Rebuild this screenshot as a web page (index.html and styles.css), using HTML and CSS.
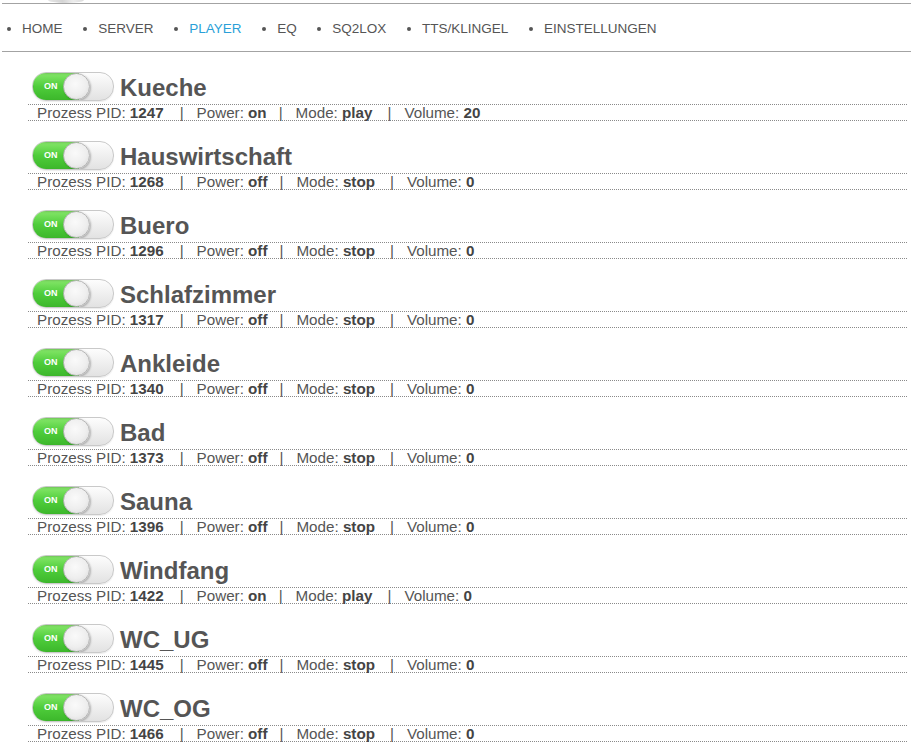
FILE: index.html
```html
<!DOCTYPE html>
<html lang="de">
<head>
<meta charset="utf-8">
<title>Player</title>
<link rel="stylesheet" href="styles.css">
</head>
<body>
<div class="top"><div class="logo-tip"></div></div>
<nav class="nav">
  <ul class="menu">
    <li><a href="#">HOME</a></li>
    <li><a href="#">SERVER</a></li>
    <li class="active"><a href="#">PLAYER</a></li>
    <li><a href="#">EQ</a></li>
    <li><a href="#">SQ2LOX</a></li>
    <li><a href="#">TTS/KLINGEL</a></li>
    <li><a href="#">EINSTELLUNGEN</a></li>
  </ul>
</nav>
<main class="players">
  <section class="player">
    <div class="head"><span class="toggle"><span class="on-label">ON</span><span class="knob"></span></span><h2 class="name">Kueche</h2></div>
    <div class="info">Prozess PID: <b>1247</b><span class="sep">|</span>Power: <b>on</b><span class="sep">|</span>Mode: <b>play</b><span class="sep">|</span>Volume: <b>20</b></div>
  </section>
  <section class="player">
    <div class="head"><span class="toggle"><span class="on-label">ON</span><span class="knob"></span></span><h2 class="name">Hauswirtschaft</h2></div>
    <div class="info">Prozess PID: <b>1268</b><span class="sep">|</span>Power: <b>off</b><span class="sep">|</span>Mode: <b>stop</b><span class="sep">|</span>Volume: <b>0</b></div>
  </section>
  <section class="player">
    <div class="head"><span class="toggle"><span class="on-label">ON</span><span class="knob"></span></span><h2 class="name">Buero</h2></div>
    <div class="info">Prozess PID: <b>1296</b><span class="sep">|</span>Power: <b>off</b><span class="sep">|</span>Mode: <b>stop</b><span class="sep">|</span>Volume: <b>0</b></div>
  </section>
  <section class="player">
    <div class="head"><span class="toggle"><span class="on-label">ON</span><span class="knob"></span></span><h2 class="name">Schlafzimmer</h2></div>
    <div class="info">Prozess PID: <b>1317</b><span class="sep">|</span>Power: <b>off</b><span class="sep">|</span>Mode: <b>stop</b><span class="sep">|</span>Volume: <b>0</b></div>
  </section>
  <section class="player">
    <div class="head"><span class="toggle"><span class="on-label">ON</span><span class="knob"></span></span><h2 class="name">Ankleide</h2></div>
    <div class="info">Prozess PID: <b>1340</b><span class="sep">|</span>Power: <b>off</b><span class="sep">|</span>Mode: <b>stop</b><span class="sep">|</span>Volume: <b>0</b></div>
  </section>
  <section class="player">
    <div class="head"><span class="toggle"><span class="on-label">ON</span><span class="knob"></span></span><h2 class="name">Bad</h2></div>
    <div class="info">Prozess PID: <b>1373</b><span class="sep">|</span>Power: <b>off</b><span class="sep">|</span>Mode: <b>stop</b><span class="sep">|</span>Volume: <b>0</b></div>
  </section>
  <section class="player">
    <div class="head"><span class="toggle"><span class="on-label">ON</span><span class="knob"></span></span><h2 class="name">Sauna</h2></div>
    <div class="info">Prozess PID: <b>1396</b><span class="sep">|</span>Power: <b>off</b><span class="sep">|</span>Mode: <b>stop</b><span class="sep">|</span>Volume: <b>0</b></div>
  </section>
  <section class="player">
    <div class="head"><span class="toggle"><span class="on-label">ON</span><span class="knob"></span></span><h2 class="name">Windfang</h2></div>
    <div class="info">Prozess PID: <b>1422</b><span class="sep">|</span>Power: <b>on</b><span class="sep">|</span>Mode: <b>play</b><span class="sep">|</span>Volume: <b>0</b></div>
  </section>
  <section class="player">
    <div class="head"><span class="toggle"><span class="on-label">ON</span><span class="knob"></span></span><h2 class="name">WC_UG</h2></div>
    <div class="info">Prozess PID: <b>1445</b><span class="sep">|</span>Power: <b>off</b><span class="sep">|</span>Mode: <b>stop</b><span class="sep">|</span>Volume: <b>0</b></div>
  </section>
  <section class="player">
    <div class="head"><span class="toggle"><span class="on-label">ON</span><span class="knob"></span></span><h2 class="name">WC_OG</h2></div>
    <div class="info">Prozess PID: <b>1466</b><span class="sep">|</span>Power: <b>off</b><span class="sep">|</span>Mode: <b>stop</b><span class="sep">|</span>Volume: <b>0</b></div>
  </section>
</main>
</body>
</html>
```
FILE: styles.css
```css
html, body {
  margin: 0;
  padding: 0;
  background: #fff;
}
body {
  font-family: "Liberation Sans", Arial, sans-serif;
  color: #555;
}
.top {
  height: 3px;
  margin-left: 2px;
  border-bottom: 1px solid #a3a3a3;
  overflow: hidden;
}
.logo-tip {
  width: 36px;
  height: 3px;
  margin-left: 46px;
  background: linear-gradient(to right, #e6e6e6, #d4d4d4 40%, #ececec 70%, #dcdcdc);
  border-radius: 0 0 18px 18px / 0 0 3px 3px;
}
.nav {
  margin-left: 2px;
  height: 47px;
  border-bottom: 1px solid #a3a3a3;
  display: flex;
  align-items: center;
}
.menu {
  list-style: none;
  margin: 0;
  padding: 2px 0 0 5px;
  display: flex;
  gap: 20.7px;
  font-size: 13.5px;
}
.menu li {
  display: flex;
  align-items: center;
}
.menu li::before {
  content: "";
  width: 4px;
  height: 4px;
  border-radius: 50%;
  background: #555;
  margin-right: 11px;
}
.menu a {
  color: #555;
  text-decoration: none;
  line-height: 16px;
}
.menu .active a {
  color: #2a9fd8;
}
.players {
  margin: 0 4px 0 28px;
  padding-top: 20px;
}
.player {
  margin-bottom: 20px;
}
.head {
  height: 32px;
  display: flex;
  align-items: flex-start;
  border-bottom: 1px dotted #8a8a8a;
}
.toggle {
  position: relative;
  flex: none;
  width: 80px;
  height: 27px;
  margin-left: 4px;
  border-radius: 14px;
  border: 1px solid #c9c9c9;
  background: linear-gradient(#fdfdfd, #e2e2e2);
  box-shadow: 0 1px 1px rgba(0,0,0,0.08);
  overflow: hidden;
}
.on-label {
  position: absolute;
  left: 0;
  top: 0;
  width: 46px;
  height: 27px;
  background: linear-gradient(#86e76a, #4fcd3b 50%, #3cb72b);
  color: #fff;
  font-size: 9px;
  font-weight: bold;
  line-height: 27px;
  padding-left: 11px;
  box-sizing: border-box;
  box-shadow: inset 0 1px 2px rgba(0,0,0,0.15);
}
.knob {
  position: absolute;
  left: 30px;
  top: 0;
  width: 27px;
  height: 27px;
  box-sizing: border-box;
  border-radius: 50%;
  border: 1px solid #b5b5b5;
  background: radial-gradient(circle at 45% 40%, #fafafa 0%, #eeeeee 55%, #d6d6d6 100%);
  box-shadow: 1px 1px 2px rgba(0,0,0,0.25);
}
.name {
  margin: 0 0 0 6px;
  font-size: 24px;
  font-weight: bold;
  line-height: 32px;
  color: #555;
}
.info {
  height: 15px;
  padding-left: 9px;
  font-size: 15.2px;
  line-height: 15px;
  white-space: nowrap;
  border-bottom: 1px dotted #8a8a8a;
  color: #555;
}
.info b {
  color: #444;
}
.sep {
  margin: 0 13px 0 16px;
}
.sep:nth-of-type(2) {
  margin-left: 12px;
}
.sep:nth-of-type(3) {
  margin-left: 15px;
}
```
